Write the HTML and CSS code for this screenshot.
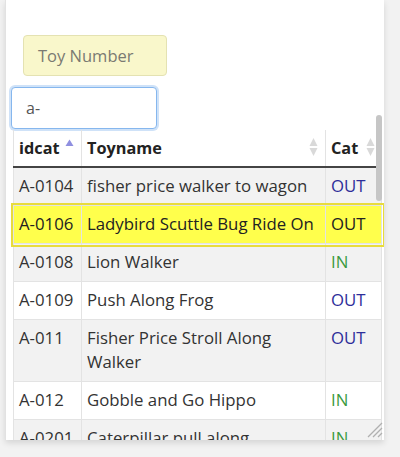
FILE: index.html
```html
<!DOCTYPE html>
<html>
<head>
<meta charset="utf-8">
<link rel="stylesheet" href="styles.css">
</head>
<body>
<div class="panel">
  <div class="badge">Toy Number</div>
  <input class="search" type="text" value="a-">
  <div class="tablewrap">
    <table class="toys">
      <thead>
        <tr>
          <th class="c-id"><span>idcat</span><span class="sort asc"><svg width="9" height="9" viewBox="0 0 9 9"><path d="M4.5 0.5 L8.5 7 H0.5 Z" fill="#8f8fe0"/></svg></span></th>
          <th class="c-name"><span>Toyname</span><span class="sort"><svg width="9" height="20" viewBox="0 0 9 20"><path d="M4.5 1 L8.5 9 H0.5 Z M0.5 11 H8.5 L4.5 19 Z" fill="#d9d9d9"/></svg></span></th>
          <th class="c-cat"><span>Cat</span><span class="sort"><svg width="9" height="20" viewBox="0 0 9 20"><path d="M4.5 1 L8.5 9 H0.5 Z M0.5 11 H8.5 L4.5 19 Z" fill="#d9d9d9"/></svg></span></th>
        </tr>
      </thead>
      <tbody>
        <tr class="odd"><td>A-0104</td><td>fisher price walker to wagon</td><td class="out">OUT</td></tr>
        <tr class="hl"><td>A-0106</td><td>Ladybird Scuttle Bug Ride On</td><td>OUT</td></tr>
        <tr class="odd"><td>A-0108</td><td>Lion Walker</td><td class="in">IN</td></tr>
        <tr><td>A-0109</td><td>Push Along Frog</td><td class="out">OUT</td></tr>
        <tr class="odd"><td>A-011</td><td>Fisher Price Stroll Along Walker</td><td class="out">OUT</td></tr>
        <tr><td>A-012</td><td>Gobble and Go Hippo</td><td class="in">IN</td></tr>
        <tr class="odd"><td>A-0201</td><td>Caterpillar pull along</td><td class="in">IN</td></tr>
      </tbody>
    </table>
  </div>
  <div class="thumb"></div>
  <svg class="grip" width="18" height="18" viewBox="0 0 18 18"><path d="M17 3 L3 17 M17 8 L8 17 M17 13 L13 17" stroke="#b0b0b0" stroke-width="1.3" fill="none"/></svg>
</div>
</body>
</html>
```
FILE: styles.css
```css
html, body {
  margin: 0;
  padding: 0;
  background: #f2f2f2;
}
body {
  font-family: "Open Sans", "Noto Sans", sans-serif;
  width: 400px;
  height: 457px;
  overflow: hidden;
}
.panel {
  position: relative;
  margin-left: 5px;
  width: 379px;
  height: 440px;
  background: #fff;
  border-left: 1px solid #e2e2e2;
  box-shadow: 0 3px 6px rgba(0,0,0,0.12);
  overflow: hidden;
  padding-top: 35px;
  box-sizing: border-box;
}
.badge {
  margin-left: 17px;
  width: 144px;
  height: 41px;
  box-sizing: border-box;
  background: #f9f7cb;
  border: 1px solid #e4e2b2;
  border-radius: 4px;
  color: #7a7a72;
  font-size: 16.5px;
  line-height: 39px;
  padding-left: 14px;
}
.search {
  display: block;
  margin: 11px 0 0 5px;
  width: 146px;
  height: 42px;
  box-sizing: border-box;
  border: 1px solid #86b7ee;
  border-radius: 4px;
  box-shadow: 0 0 0 2px #cfe2f8;
  padding: 0 14px;
  font-family: inherit;
  font-size: 16px;
  color: #555;
  outline: none;
}
.tablewrap {
  margin: 1px 0 0 7px;
  width: 364px;
}
.toys {
  width: 364px;
  border-collapse: collapse;
  font-size: 16.8px;
  color: #333;
  table-layout: fixed;
}
.toys th, .toys td {
  border: 1px solid #e3e3e3;
  padding: 0 5px;
  text-align: left;
  vertical-align: top;
}
.toys th {
  height: 36px;
  font-size: 16.3px;
  font-weight: 700;
  color: #222;
  border-bottom: 2px solid #444;
  border-top: none;
  line-height: 36px;
  white-space: nowrap;
}
.toys th span:first-child {
  display: inline-block;
}
.toys th .sort {
  float: right;
  margin-top: 7px;
  line-height: 20px;
  height: 20px;
}
.toys th .sort svg { display: block; }
.toys th .sort.asc { float: none; margin-left: 5px; display: inline-block; vertical-align: top; margin-top: 9px; height: 9px; }
.c-id { width: 57px; }
.c-name { width: 231px; padding-right: 7px !important; }
.c-cat { width: 44px; padding-right: 6px !important; padding-left: 5px; }
.toys td {
  line-height: 24px;
  padding-top: 6px;
  padding-bottom: 7px;
}
.toys tr.odd td { background: #f2f2f2; }
.toys tr.hl td { background: #ffff4c; color: #222; }
.toys tr.hl { outline: 2px solid #e8dc3c; outline-offset: 1px; }
.out { color: #2e2e9a; }
.in { color: #3a9a40; }
.thumb {
  position: absolute;
  left: 370px;
  top: 115px;
  width: 6px;
  height: 86px;
  border-radius: 3px;
  background: #c6c6c6;
}
.grip {
  position: absolute;
  right: 1px;
  bottom: 2px;
}
```
